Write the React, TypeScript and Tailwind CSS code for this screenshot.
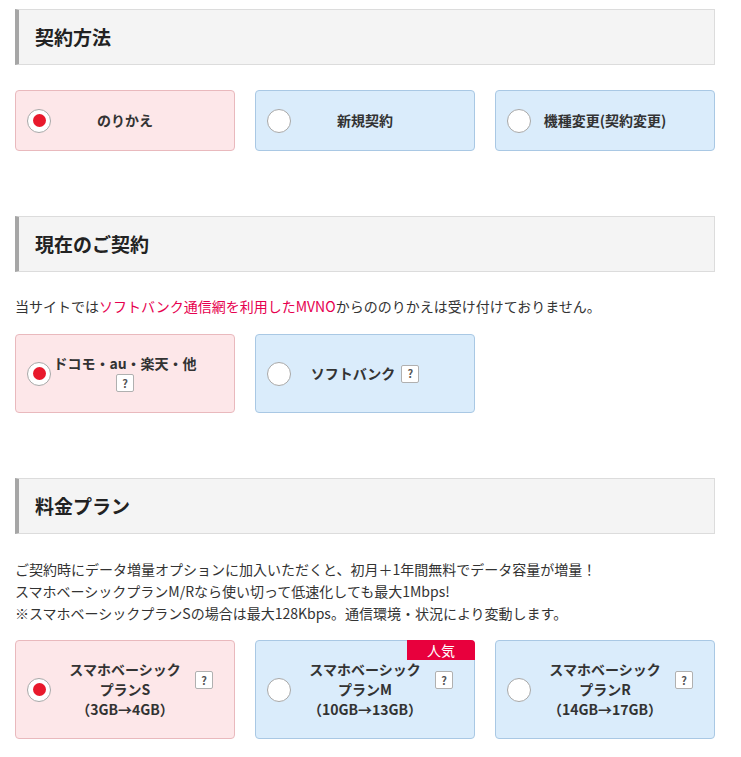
import React from "react";

type Tone = "pink" | "blue";

function Radio({ on }: { on: boolean }) {
  return (
    <span className="absolute left-[11px] top-1/2 -translate-y-1/2 w-[24px] h-[24px] rounded-full bg-white border border-[#a8a8a8] flex items-center justify-center">
      {on && <span className="w-[13px] h-[13px] rounded-full bg-[#e8192c]" />}
    </span>
  );
}

function Q({ className = "" }: { className?: string }) {
  return (
    <span className={"inline-flex items-center justify-center w-[18px] h-[18px] bg-white border border-[#b0b0b0] rounded-[2px] text-[11px] font-bold text-[#555] leading-none " + className}>?</span>
  );
}

function Card({ tone, on, h, children, badge }: { tone: Tone; on: boolean; h: string; children: React.ReactNode; badge?: boolean }) {
  const c = tone === "pink" ? "bg-[#fde7e9] border-[#e9b9bd]" : "bg-[#daecfb] border-[#a9c8e4]";
  return (
    <div className={"relative rounded-[4px] border flex items-center justify-center text-center text-[14px] font-bold text-[#333] " + c + " " + h}>
      <Radio on={on} />
      {badge && (
        <span className="absolute -top-px -right-px w-[68px] h-[20px] bg-[#e8003d] rounded-tr-[4px] text-white text-[14px] font-normal leading-[20px] text-center">人気</span>
      )}
      {children}
    </div>
  );
}

function Heading({ children }: { children: React.ReactNode }) {
  return (
    <div className="h-[56px] bg-[#f4f4f4] border border-[#dcdcdc] border-l-[4px] border-l-[#a6a6a6] flex items-center pl-[16px] text-[19px] font-bold text-[#222]">
      {children}
    </div>
  );
}

function Plan({ name, size }: { name: string; size: string }) {
  return (
    <>
      <div className="leading-[20px] -mt-[2px]">
        スマホベーシック<br />{name}<br />{size}
      </div>
      <Q className="absolute right-[21px] top-[30px]" />
    </>
  );
}

export default function App() {
  return (
    <div className="w-[730px] bg-white px-[15px] pt-[9px] pb-[18px] text-[#333]" style={{ fontFamily: '"Noto Sans CJK JP", "Noto Sans", sans-serif' }}>
      <Heading>契約方法</Heading>
      <div className="grid grid-cols-3 gap-[20px] mt-[25px]">
        <Card tone="pink" on h="h-[61px]">のりかえ</Card>
        <Card tone="blue" on={false} h="h-[61px]">新規契約</Card>
        <Card tone="blue" on={false} h="h-[61px]">機種変更(契約変更)</Card>
      </div>

      <div className="mt-[65px]">
        <Heading>現在のご契約</Heading>
      </div>
      <p className="mt-[23px] text-[14px] leading-[22px]">
        当サイトでは<span className="text-[#e6004f]">ソフトバンク通信網を利用したMVNO</span>からののりかえは受け付けておりません。
      </p>
      <div className="grid grid-cols-3 gap-[20px] mt-[17px]">
        <Card tone="pink" on h="h-[79px]">
          <div className="flex flex-col items-center leading-[20px] -mt-[2px]">
            <span>ドコモ・au・楽天・他</span>
            <Q className="mt-[1px]" />
          </div>
        </Card>
        <Card tone="blue" on={false} h="h-[79px]">
          <span className="flex items-center gap-[6px]">ソフトバンク<Q /></span>
        </Card>
      </div>

      <div className="mt-[65px]">
        <Heading>料金プラン</Heading>
      </div>
      <p className="mt-[24px] text-[14px] leading-[22px]">
        ご契約時にデータ増量オプションに加入いただくと、初月＋1年間無料でデータ容量が増量！<br />
        スマホベーシックプランM/Rなら使い切って低速化しても最大1Mbps!<br />
        ※スマホベーシックプランSの場合は最大128Kbps。通信環境・状況により変動します。
      </p>
      <div className="grid grid-cols-3 gap-[20px] mt-[16px]">
        <Card tone="pink" on h="h-[99px]"><Plan name="プランS" size="（3GB→4GB）" /></Card>
        <Card tone="blue" on={false} h="h-[99px]" badge><Plan name="プランM" size="（10GB→13GB）" /></Card>
        <Card tone="blue" on={false} h="h-[99px]"><Plan name="プランR" size="（14GB→17GB）" /></Card>
      </div>
    </div>
  );
}
